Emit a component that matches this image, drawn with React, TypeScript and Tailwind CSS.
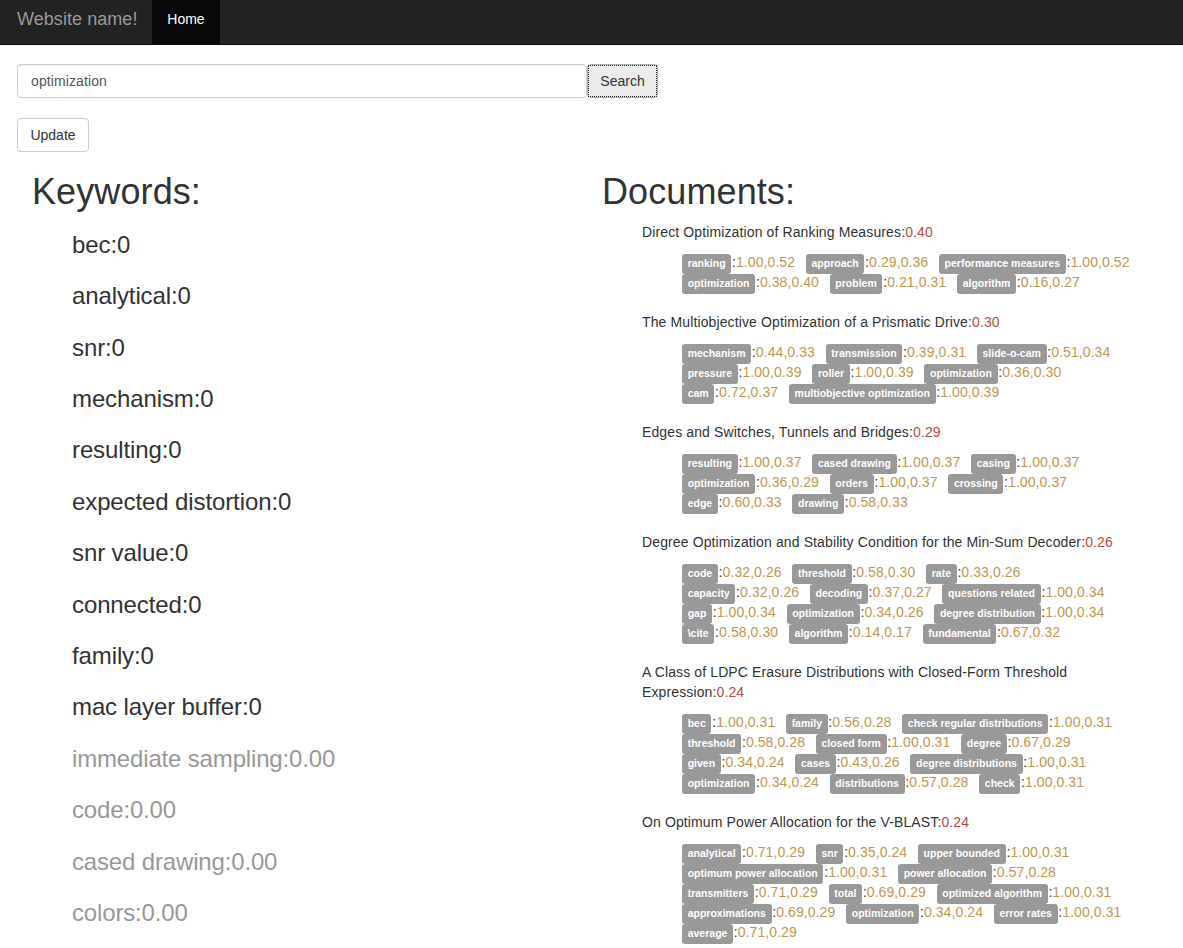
type Tag = [string, string];
type Doc = { title: string; score: string; rows: Tag[][] };

const keywords: [string, string, boolean][] = [
  ["bec", "0", false],
  ["analytical", "0", false],
  ["snr", "0", false],
  ["mechanism", "0", false],
  ["resulting", "0", false],
  ["expected distortion", "0", false],
  ["snr value", "0", false],
  ["connected", "0", false],
  ["family", "0", false],
  ["mac layer buffer", "0", false],
  ["immediate sampling", "0.00", true],
  ["code", "0.00", true],
  ["cased drawing", "0.00", true],
  ["colors", "0.00", true],
];

const docs: Doc[] = [
  {
    title: "Direct Optimization of Ranking Measures",
    score: "0.40",
    rows: [
      [["ranking", "1.00,0.52"], ["approach", "0.29,0.36"], ["performance measures", "1.00,0.52"]],
      [["optimization", "0.38,0.40"], ["problem", "0.21,0.31"], ["algorithm", "0.16,0.27"]],
    ],
  },
  {
    title: "The Multiobjective Optimization of a Prismatic Drive",
    score: "0.30",
    rows: [
      [["mechanism", "0.44,0.33"], ["transmission", "0.39,0.31"], ["slide-o-cam", "0.51,0.34"]],
      [["pressure", "1.00,0.39"], ["roller", "1.00,0.39"], ["optimization", "0.36,0.30"]],
      [["cam", "0.72,0.37"], ["multiobjective optimization", "1.00,0.39"]],
    ],
  },
  {
    title: "Edges and Switches, Tunnels and Bridges",
    score: "0.29",
    rows: [
      [["resulting", "1.00,0.37"], ["cased drawing", "1.00,0.37"], ["casing", "1.00,0.37"]],
      [["optimization", "0.36,0.29"], ["orders", "1.00,0.37"], ["crossing", "1.00,0.37"]],
      [["edge", "0.60,0.33"], ["drawing", "0.58,0.33"]],
    ],
  },
  {
    title: "Degree Optimization and Stability Condition for the Min-Sum Decoder",
    score: "0.26",
    rows: [
      [["code", "0.32,0.26"], ["threshold", "0.58,0.30"], ["rate", "0.33,0.26"]],
      [["capacity", "0.32,0.26"], ["decoding", "0.37,0.27"], ["questions related", "1.00,0.34"]],
      [["gap", "1.00,0.34"], ["optimization", "0.34,0.26"], ["degree distribution", "1.00,0.34"]],
      [["\\cite", "0.58,0.30"], ["algorithm", "0.14,0.17"], ["fundamental", "0.67,0.32"]],
    ],
  },
  {
    title: "A Class of LDPC Erasure Distributions with Closed-Form Threshold Expression",
    score: "0.24",
    rows: [
      [["bec", "1.00,0.31"], ["family", "0.56,0.28"], ["check regular distributions", "1.00,0.31"]],
      [["threshold", "0.58,0.28"], ["closed form", "1.00,0.31"], ["degree", "0.67,0.29"]],
      [["given", "0.34,0.24"], ["cases", "0.43,0.26"], ["degree distributions", "1.00,0.31"]],
      [["optimization", "0.34,0.24"], ["distributions", "0.57,0.28"], ["check", "1.00,0.31"]],
    ],
  },
  {
    title: "On Optimum Power Allocation for the V-BLAST",
    score: "0.24",
    rows: [
      [["analytical", "0.71,0.29"], ["snr", "0.35,0.24"], ["upper bounded", "1.00,0.31"]],
      [["optimum power allocation", "1.00,0.31"], ["power allocation", "0.57,0.28"]],
      [["transmitters", "0.71,0.29"], ["total", "0.69,0.29"], ["optimized algorithm", "1.00,0.31"]],
      [["approximations", "0.69,0.29"], ["optimization", "0.34,0.24"], ["error rates", "1.00,0.31"]],
      [["average", "0.71,0.29"]],
    ],
  },
];

function DocumentEntry({ doc }: { doc: Doc }) {
  return (
    <li className="mb-5">
      <p className="w-[490px] tracking-[0.12px]">
        {doc.title}:<span className="text-[#b94a48]">{doc.score}</span>
      </p>
      <div className="mt-2.5 ml-10">
        {doc.rows.map((row, i) => (
          <div key={i} className="flex h-5 gap-[10.7px] whitespace-nowrap">
            {row.map(([name, value]) => (
              <div key={name} className="flex">
                <span className="mt-0.5 mr-[0.7px] h-5 rounded-[3px] bg-[#999] px-[5.7px] text-[10.5px] leading-[19px] font-bold text-white">
                  {name}
                </span>
                <span className="tracking-[0.08px]">
                  :<span className="text-[#c09853]">{value}</span>
                </span>
              </div>
            ))}
          </div>
        ))}
      </div>
    </li>
  );
}

export default function App() {
  return (
    <div className="h-[948px] overflow-hidden bg-white font-['Liberation_Sans',Arial,sans-serif] text-sm leading-5 text-[#333]">
      <nav className="flex h-[45px] border-b border-[#080808] bg-[#222]">
        <a className="w-[152px] pt-[9px] pl-[17px] text-lg leading-5 tracking-[0.06px] text-[#999]">Website name!</a>
        <a className="w-[68px] bg-[#080808] pt-[9px] text-center text-white">Home</a>
      </nav>

      <form className="mt-[19px] ml-[17px] flex" onSubmit={(e) => e.preventDefault()}>
        <input
          className="h-[34px] w-[570px] rounded border border-[#ccc] px-[13px] text-sm tracking-[0.1px] text-[#555] shadow-[inset_0_1px_1px_rgba(0,0,0,0.075)] outline-none"
          defaultValue="optimization"
        />
        <button className="flex h-[34px] w-[71px] rounded border border-[#adadad] bg-[#ebebeb]">
          <span className="h-full w-full rounded-[1px] border border-dotted border-[#222] leading-[30px]">Search</span>
        </button>
      </form>
      <button className="mt-5 ml-[17px] block h-[34px] w-[72px] rounded border border-[#ccc] bg-white">Update</button>

      <div className="mt-5 flex pl-8">
        <section className="w-[570px]">
          <h1 className="text-4xl leading-[40px] tracking-[0.1px]">Keywords:</h1>
          <ul className="mt-[19.7px] ml-10">
            {keywords.map(([name, value, muted]) => (
              <li
                key={name}
                className={
                  muted
                    ? "mb-[25px] text-2xl leading-[26.4px] tracking-[-0.16px] text-[#999]"
                    : "mb-[25px] text-2xl leading-[26.4px] tracking-[-0.11px]"
                }
              >
                {name}:{value}
              </li>
            ))}
          </ul>
        </section>
        <section>
          <h1 className="text-4xl leading-[40px] tracking-[0.1px]">Documents:</h1>
          <ul className="mt-2.5 ml-10">
            {docs.map((doc) => (
              <DocumentEntry key={doc.title} doc={doc} />
            ))}
          </ul>
        </section>
      </div>
    </div>
  );
}
